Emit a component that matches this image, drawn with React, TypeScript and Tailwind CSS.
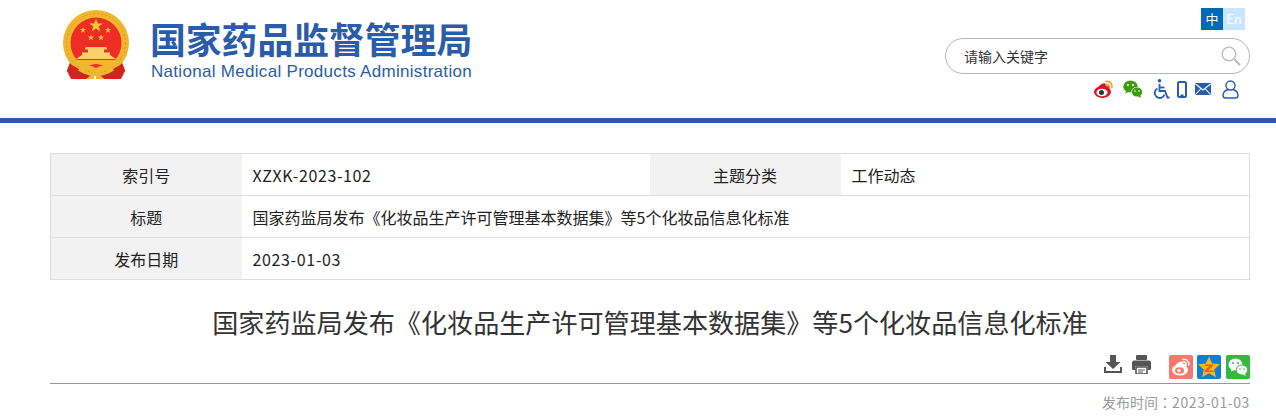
const FONT = "font-['Noto_Sans_CJK_SC',sans-serif]";

const Emblem = () => (
  <svg viewBox="63 10 67 70" className="h-[70px] w-[67px]">
    <path d="M71 60 L67 70 L73 79 L88 79 L96 72 L104 79 L119 79 L125 70 L121 60 Z" fill="#d3231e" />
    <circle cx="96" cy="43" r="33" fill="#f1b52e" />
    <circle cx="96" cy="43" r="29.500" fill="none" stroke="#d99a1e" strokeWidth="1" strokeDasharray="2 2" />
    <circle cx="96" cy="43" r="25.500" fill="#ee2e24" />
    <path d="M96 18.500l1.700 4.900h5.200l-4.200 3.100 1.600 5-4.300-3-4.300 3 1.600-5-4.200-3.100h5.200z" fill="#f6c83c" />
    <path d="M83 27l.8 2.100h2.200l-1.800 1.400.7 2.200-1.900-1.300-1.900 1.300.7-2.200-1.800-1.400h2.200z" fill="#f6c83c" />
    <path d="M108 27l.8 2.100h2.200l-1.800 1.400.7 2.200-1.900-1.300-1.900 1.300.7-2.200-1.800-1.400h2.200z" fill="#f6c83c" />
    <path d="M91 34.500l.8 2.100h2.200l-1.800 1.400.7 2.200-1.900-1.300-1.900 1.300.7-2.200-1.800-1.400h2.200z" fill="#f6c83c" />
    <path d="M101 34.500l.8 2.100h2.200l-1.800 1.400.7 2.200-1.900-1.300-1.900 1.300.7-2.200-1.800-1.400h2.200z" fill="#f6c83c" />
    <path d="M86 47h20l1.500 2.500H104v3h6v2.500l6 4H76l6-4v-2.500h6v-3h-3.500z" fill="#f7d16b" />
    <path d="M72 60h48l-2 5-10 1-12-2-12 2-10-1z" fill="#f1b52e" />
    <path d="M82 64c4 0 8 1 14 4 6-3 10-4 14-4l3 5c-4 2-9 2-13 1l-1 5 5 4h-8l-0-5h-2l-0 5h-8l5-4-1-5c-4 1-9 1-13-1z" fill="#f1b52e" />
    <path d="M70 64l9 5-5 10h-3l-4-8zM122 64l-9 5 5 10h3l4-8z" fill="#d3231e" />
  </svg>
);

const Weibo = () => (
  <svg viewBox="0 0 20 20" className="h-5 w-5">
    <ellipse cx="8.500" cy="13" rx="8.500" ry="6" fill="#e0141c" />
    <path d="M3 10c2-4 6-6.500 8-5.500 1.500.8.800 2.800.800 2.800s2.500-.8 3.500.4c.8 1-.2 2.500-.2 2.500z" fill="#e0141c" />
    <ellipse cx="8" cy="13.500" rx="5.500" ry="3.800" fill="#fff" />
    <circle cx="7.500" cy="13.500" r="2.500" fill="#333" />
    <path d="M12 2.500c3.500-.8 6.800 2 6 6M12.500 5.500c1.800-.3 3.300 1 3 3" fill="none" stroke="#f0a01e" strokeWidth="1.600" strokeLinecap="round" />
  </svg>
);

const Wechat = () => (
  <svg viewBox="0 0 20 20" className="h-5 w-5">
    <ellipse cx="7.500" cy="7.500" rx="7.200" ry="6" fill="#3f9b12" />
    <path d="M3 11l-.5 3.500L6 12.500z" fill="#3f9b12" />
    <ellipse cx="14" cy="13" rx="5.800" ry="5" fill="#fff" />
    <ellipse cx="14" cy="13" rx="5.200" ry="4.600" fill="#3f9b12" />
    <path d="M17 16l1 3-3-1.500z" fill="#3f9b12" />
    <circle cx="5" cy="6" r="1" fill="#fff" />
    <circle cx="10" cy="6" r="1" fill="#fff" />
    <circle cx="12" cy="12" r=".8" fill="#fff" />
    <circle cx="16" cy="12" r=".8" fill="#fff" />
  </svg>
);

const Wheelchair = () => (
  <svg viewBox="0 0 17 20" className="h-5 w-[17px]" fill="none" stroke="#2a5caa" strokeWidth="1.800">
    <circle cx="6.500" cy="1.800" r="1.800" fill="#2a5caa" stroke="none" />
    <path d="M6.500 5v7h5.500l2.500 6.500h2" />
    <path d="M6.500 8.500h5" />
    <path d="M4.500 9.500a5 5 0 1 0 7 6" />
  </svg>
);

const Phone = () => (
  <svg viewBox="0 0 10 17" className="h-[17px] w-[10px]">
    <rect x="1" y="1" width="8" height="15" rx="1.500" fill="none" stroke="#2a5caa" strokeWidth="2" />
    <rect x="3.500" y="13.500" width="3" height="1.500" fill="#2a5caa" />
  </svg>
);

const Mail = () => (
  <svg viewBox="0 0 16 12" className="h-3 w-4">
    <rect width="16" height="12" rx="1" fill="#2a5caa" />
    <path d="M0.500 1L8 7l7.500-6M0.500 11.500L6 5.500M15.500 11.500L10 5.500" fill="none" stroke="#fff" strokeWidth="1.100" />
  </svg>
);

const User = () => (
  <svg viewBox="0 0 17 19" className="h-[19px] w-[17px]" fill="none" stroke="#2a5caa" strokeWidth="1.400">
    <circle cx="8.500" cy="5.500" r="4.500" />
    <path d="M6 9.500C3 10.500 1 12.500 1 15.500c0 1.800 1 2.500 2.500 2.500h10c1.500 0 2.500-.7 2.500-2.500 0-3-2-5-5-6" />
  </svg>
);

const Download = () => (
  <svg viewBox="0 0 18 18" className="h-[18px] w-[18px]" fill="#555">
    <path d="M6 0h6v7h4.500L9 14 1.500 7H6z" />
    <path d="M0 12h2v4h14v-4h2v6H0z" />
  </svg>
);

const Printer = () => (
  <svg viewBox="0 0 19 19" className="h-[19px] w-[19px]">
    <rect x="4" y="0" width="11" height="5" rx="1" fill="#555" />
    <path d="M2 5.500h15c1 0 2 1 2 2v6c0 1-1 1.500-2 1.500h-1v-4H3v4H2c-1 0-2-.5-2-1.500v-6c0-1 1-2 2-2z" fill="#555" />
    <rect x="4" y="12" width="11" height="7" fill="#fff" stroke="#555" strokeWidth="1.600" />
    <path d="M6 15h7M6 17h5" stroke="#555" strokeWidth="1" />
  </svg>
);

const ShareWeibo = () => (
  <div className="flex h-6 w-6 items-center justify-center rounded-[2px] bg-[#f9776b]">
    <svg viewBox="0 0 20 20" className="h-[20px] w-[20px]">
      <ellipse cx="9" cy="13" rx="8" ry="5.500" fill="#fff" />
      <path d="M4 9c2-3.500 5-5 7-4.500 1.500.5.800 2.500.800 2.500s2.500-.8 3.500.3c.7.800-.2 2.200-.2 2.200z" fill="#fff" />
      <ellipse cx="8.500" cy="13.500" rx="4.500" ry="3.300" fill="#f9776b" />
      <circle cx="8" cy="13.500" r="1.800" fill="#fff" />
      <path d="M12 2.500c3.500-.8 6.500 2 5.800 5.500M12.500 5c1.800-.3 3 1 2.800 2.800" fill="none" stroke="#fff" strokeWidth="1.400" strokeLinecap="round" />
    </svg>
  </div>
);

const ShareQzone = () => (
  <div className="flex h-6 w-6 items-center justify-center rounded-[2px] bg-[#0f7fd6]">
    <svg viewBox="0 0 24 24" className="h-6 w-6">
      <path d="M12 1.500l3.200 7 7.800.8-5.800 5.200 1.700 7.800-6.900-4-6.900 4 1.700-7.800L1 9.300l7.800-.8z" fill="#fbb41c" />
      <path d="M8 9.500h8v1.500l-5 4.500h5.500V17H7.500v-1.500l5-4.500H8z" fill="#e8641b" />
    </svg>
  </div>
);

const ShareWechat = () => (
  <div className="flex h-6 w-6 items-center justify-center rounded-[2px] bg-[#35b83f]">
    <svg viewBox="0 0 20 20" className="h-[20px] w-[20px]">
      <ellipse cx="7.500" cy="7.500" rx="7" ry="6" fill="#fff" />
      <path d="M3.500 11l-.5 3.500L7 12.500z" fill="#fff" />
      <ellipse cx="14" cy="13" rx="5.800" ry="5" fill="#fff" stroke="#35b83f" strokeWidth="1" />
      <path d="M17 16.500l.8 2.500-3-1.500z" fill="#fff" />
      <circle cx="5" cy="6" r="1" fill="#35b83f" />
      <circle cx="10" cy="6" r="1" fill="#35b83f" />
      <circle cx="12" cy="12" r=".8" fill="#35b83f" />
      <circle cx="16" cy="12" r=".8" fill="#35b83f" />
    </svg>
  </div>
);

const App = () => {
  return (
    <div className={`${FONT} bg-white text-[#222]`}>
      <header className="h-[123px] border-b-[5px] border-[#2a5caa]">
        <div className="ml-[50px] flex w-[1200px] justify-between">
          <div className="flex pt-[10px] pl-[13px]">
            <Emblem />
            <div className="ml-[21px] flex flex-col pt-[6px]">
              <div className="-ml-[1px] text-[35.800px] leading-[44px] font-bold whitespace-nowrap text-[#2a5caa]">
                国家药品监督管理局
              </div>
              <div className="mt-[1px] font-['Liberation_Sans',sans-serif] text-[17px] leading-[21px] tracking-[0.3px] whitespace-nowrap text-[#2a5caa]">
                National Medical Products Administration
              </div>
            </div>
          </div>
          <div className="flex w-[305px] flex-col items-end pt-[8px]">
            <div className="mr-[5px] flex text-[13px] leading-[22px] text-white">
              <span className="h-[22px] w-[22px] bg-[#0069b9] text-center">中</span>
              <span className="h-[22px] w-[22px] bg-[#c8e6ff] text-center">En</span>
            </div>
            <div className="mt-[8px] flex h-[36px] w-full items-center justify-between rounded-full border border-[#b5b5b5] pr-[8px] pl-[18px] text-[14px] text-[#333]">
              <span>请输入关键字</span>
              <svg viewBox="0 0 20 20" className="h-5 w-5" fill="none" stroke="#bbb">
                <circle cx="8" cy="8" r="6.800" strokeWidth="1.300" />
                <path d="M13 13l6 6" strokeWidth="2" />
              </svg>
            </div>
            <div className="mt-[5px] mr-[11px] flex items-center">
              <Weibo />
              <span className="ml-[9px]"><Wechat /></span>
              <span className="ml-[10px]"><Wheelchair /></span>
              <span className="ml-[7px]"><Phone /></span>
              <span className="ml-[8px]"><Mail /></span>
              <span className="ml-[11px]"><User /></span>
            </div>
          </div>
        </div>
      </header>

      <main className="ml-[50px] w-[1200px]">
        <table className="mt-[30px] w-full table-fixed border-collapse border border-[#ddd] text-[16px]">
          <colgroup>
            <col className="w-[191px]" />
            <col className="w-[408px]" />
            <col className="w-[191px]" />
            <col />
          </colgroup>
          <tbody>
            <tr className="h-[42px] border-b border-[#ddd]">
              <td className="bg-[#f2f2f2] text-center">索引号</td>
              <td className="px-[11px] tracking-[0.62px]">XZXK-2023-102</td>
              <td className="bg-[#f2f2f2] text-center">主题分类</td>
              <td className="px-[11px]">工作动态</td>
            </tr>
            <tr className="h-[42px] border-b border-[#ddd]">
              <td className="bg-[#f2f2f2] text-center">标题</td>
              <td colSpan={3} className="px-[11px]">
                国家药监局发布《化妆品生产许可管理基本数据集》等5个化妆品信息化标准
              </td>
            </tr>
            <tr className="h-[42px]">
              <td className="bg-[#f2f2f2] text-center">发布日期</td>
              <td colSpan={3} className="px-[11px] tracking-[0.65px]">2023-01-03</td>
            </tr>
          </tbody>
        </table>

        <h1 className="mt-[23px] text-center text-[26.100px] leading-[38px] font-normal text-[#333]">
          国家药监局发布《化妆品生产许可管理基本数据集》等5个化妆品信息化标准
        </h1>

        <div className="mt-[14px] flex h-[29px] items-start justify-end border-b border-[#999]">
          <Download />
          <span className="ml-[10px]"><Printer /></span>
          <span className="ml-[18px]"><ShareWeibo /></span>
          <span className="ml-[4px]"><ShareQzone /></span>
          <span className="ml-[5px]"><ShareWechat /></span>
        </div>

        <div className="mt-[8px] text-right text-[14px] leading-[20px] text-[#999]">
          发布时间<span className="font-['Noto_Sans_CJK_TC',sans-serif]">：</span>
          <span className="tracking-[0.6px]">2023-01-03</span>
        </div>
      </main>
    </div>
  );
};

export default App;
